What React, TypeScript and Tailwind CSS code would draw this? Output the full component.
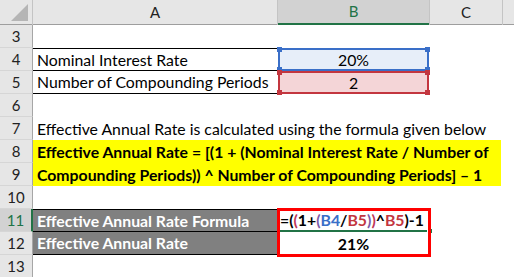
import React from 'react'

const rowH = 'h-[23px]'

function RowHead({ n, selected = false }: { n: number; selected?: boolean }) {
  return (
    <div
      className={
        'w-[33px] shrink-0 flex items-center justify-center text-[15px] border-b border-[#d6d6d6] ' +
        (selected
          ? 'bg-[#d2d2d2] text-[#217346] border-r-2 border-r-[#217346]'
          : 'bg-[#e6e6e6] text-[#222] border-r border-r-[#a6a6a6]')
      }
    >
      {n}
    </div>
  )
}

function Corners({ color }: { color: string }) {
  return (
    <>
      <span className={`absolute -left-[3px] -top-[3px] w-[5px] h-[5px] ${color}`} />
      <span className={`absolute -right-[3px] -top-[3px] w-[5px] h-[5px] ${color}`} />
      <span className={`absolute -left-[3px] -bottom-[3px] w-[5px] h-[5px] ${color}`} />
      <span className={`absolute -right-[3px] -bottom-[3px] w-[5px] h-[5px] ${color}`} />
    </>
  )
}

export default function App() {
  return (
    <div className="w-[514px] h-[277px] overflow-hidden bg-white text-[15.8px] text-black font-['Lato',sans-serif]">
      {/* column headers */}
      <div className="h-[25px] bg-[#e6e6e6] flex flex-col border-b border-[#9e9e9e] text-[15px]">
        <div className="h-[3px]" />
        <div className="flex flex-1 text-[#222]">
          <div className="w-[33px] shrink-0 relative border-r border-[#c4c4c4]">
            <div className="absolute right-[4px] bottom-[4px] w-0 h-0 border-l-[17px] border-l-transparent border-b-[17px] border-b-[#b5b5b5]" />
          </div>
          <div className="w-[245px] shrink-0 flex items-center justify-center border-r border-[#c4c4c4]">A</div>
          <div className="w-[151px] shrink-0 flex items-center justify-center bg-[#d2d2d2] text-[#217346] border-b-2 border-[#217346]">B</div>
          <div className="w-[74px] shrink-0 flex items-center justify-center border-l border-r border-[#c4c4c4]">C</div>
          <div className="flex-1" />
        </div>
      </div>

      {/* row 3 */}
      <div className={`flex ${rowH}`}>
        <RowHead n={3} />
      </div>

      {/* row 4 */}
      <div className={`flex ${rowH}`}>
        <RowHead n={4} />
        <div className="w-[245px] shrink-0 flex items-center pl-[4px] border-t border-b border-black">Nominal Interest Rate</div>
        <div className="w-[151px] shrink-0 relative flex items-center justify-center bg-[#e7eef9] border-2 border-[#3a6fc8]">
          20%
          <Corners color="bg-[#3a6fc8]" />
        </div>
      </div>

      {/* row 5 */}
      <div className={`flex ${rowH}`}>
        <RowHead n={5} />
        <div className="w-[245px] shrink-0 flex items-center pl-[4px] border-b border-black whitespace-nowrap">Number of Compounding Periods</div>
        <div className="w-[151px] shrink-0 relative flex items-center justify-center bg-[#f4d5d7] border-2 border-[#c3363f]">
          2
          <Corners color="bg-[#c3363f]" />
        </div>
      </div>

      {/* row 6 */}
      <div className={`flex ${rowH}`}>
        <RowHead n={6} />
      </div>

      {/* row 7 */}
      <div className={`flex ${rowH}`}>
        <RowHead n={7} />
        <div className="flex items-center pl-[4px] whitespace-nowrap">
          Effective Annual Rate is calculated using the formula given below
        </div>
      </div>

      {/* rows 8-9 */}
      <div className={`flex ${rowH}`}>
        <RowHead n={8} />
        <div className="w-[468px] shrink-0 flex items-center pl-[4px] bg-[#ffff00] font-bold whitespace-nowrap">
          Effective Annual Rate = [(1 + (Nominal Interest Rate / Number of
        </div>
      </div>
      <div className={`flex ${rowH}`}>
        <RowHead n={9} />
        <div className="w-[468px] shrink-0 flex items-center pl-[4px] bg-[#ffff00] font-bold whitespace-nowrap">
          Compounding Periods)) ^ Number of Compounding Periods] – 1
        </div>
      </div>

      {/* row 10 */}
      <div className={`flex ${rowH}`}>
        <RowHead n={10} />
      </div>

      {/* row 11 */}
      <div className={`flex ${rowH}`}>
        <RowHead n={11} selected />
        <div className="w-[245px] shrink-0 flex items-center pl-[4px] bg-[#808080] text-white font-bold border-t border-b border-black">
          Effective Annual Rate Formula
        </div>
        <div className="w-[151px] shrink-0 relative flex items-center pl-[2px] font-bold whitespace-nowrap border-b-2 border-[#217346]">
          <span>=(</span>
          <span className="text-[#c0365a]">(</span>
          <span>1+</span>
          <span className="text-[#7c5aa8]">(</span>
          <span className="text-[#3a6fc8]">B4</span>
          <span>/</span>
          <span className="text-[#c3363f]">B5</span>
          <span className="text-[#7c5aa8]">)</span>
          <span className="text-[#c0365a]">)</span>
          <span>^</span>
          <span className="text-[#c3363f]">B5</span>
          <span>)-1</span>
          <span className="absolute -right-[4px] -bottom-[4px] w-[6px] h-[6px] bg-[#217346] border border-white" />
          <div className="absolute -left-[1px] -top-[1px] w-[154px] h-[49px] border-[3px] border-[#ff0000] z-10 pointer-events-none" />
        </div>
      </div>

      {/* row 12 */}
      <div className={`flex ${rowH}`}>
        <RowHead n={12} />
        <div className="w-[245px] shrink-0 flex items-center pl-[4px] bg-[#808080] text-white font-bold border-b border-black">
          Effective Annual Rate
        </div>
        <div className="w-[151px] shrink-0 flex items-center justify-center font-bold">21%</div>
      </div>

      {/* row 13 */}
      <div className={`flex ${rowH}`}>
        <RowHead n={13} />
      </div>
    </div>
  )
}
